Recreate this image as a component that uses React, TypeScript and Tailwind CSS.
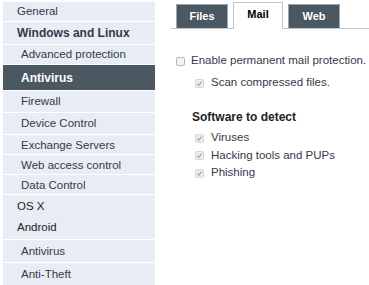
import React from 'react';

type NavItem = { label: string; h: string; indent?: boolean; bold?: boolean; active?: boolean };

const NAV: NavItem[] = [
  { label: 'General', h: 'h-[19px]' },
  { label: 'Windows and Linux', h: 'h-[22px]', bold: true },
  { label: 'Advanced protection', h: 'h-[19px]', indent: true },
  { label: 'Antivirus', h: 'h-[25px]', indent: true, active: true },
  { label: 'Firewall', h: 'h-[21px]', indent: true },
  { label: 'Device Control', h: 'h-[22px]', indent: true },
  { label: 'Exchange Servers', h: 'h-[19px]', indent: true },
  { label: 'Web access control', h: 'h-[19px]', indent: true },
  { label: 'Data Control', h: 'h-[19px]', indent: true },
];

const NAV_BOTTOM: NavItem[] = [
  { label: 'Antivirus', h: 'h-[22px]', indent: true },
  { label: 'Anti-Theft', h: 'h-[22px]', indent: true },
];

function NavRow({ item }: { item: NavItem }) {
  return (
    <div
      className={`${item.h} flex items-center pt-px ${item.indent ? 'pl-[18px]' : 'pl-[14px]'} ${
        item.active ? 'bg-[#4b5761] text-white font-bold text-[12px]' : 'bg-[#e8edf5] text-[#38374a]'
      } ${item.bold ? 'font-bold text-[#222] text-[12px]' : ''}`}
    >
      {item.label}
    </div>
  );
}

function Check({ checked, disabled }: { checked?: boolean; disabled?: boolean }) {
  return (
    <span
      className={`w-[9px] h-[9px] rounded-[2px] border flex items-center justify-center shrink-0 ${
        disabled ? 'border-[#d6d6d6] bg-[#ededed]' : 'border-[#b8b8b8] bg-[#f3f3f3]'
      }`}
    >
      {checked && (
        <svg width="7" height="7" viewBox="0 0 8 8">
          <path d="M1.5 4.2 L3.2 6 L6.5 1.8" fill="none" stroke="#a8a8a8" strokeWidth="1.4" />
        </svg>
      )}
    </span>
  );
}

function Tab({ label, active }: { label: string; active?: boolean }) {
  return active ? (
    <div className="w-[50px] h-[27px] -mb-px border border-b-0 border-[#c3c6c9] bg-white flex items-center justify-center pb-[3px] text-[11px] font-bold text-black">
      {label}
    </div>
  ) : (
    <div className="w-[52px] h-[24px] border border-b-0 border-[#9da4aa] bg-[#4b5761] flex items-center justify-center text-[11px] font-bold text-white">
      {label}
    </div>
  );
}

export default function App() {
  return (
    <div
      className="w-[369px] h-[285px] bg-white flex overflow-hidden text-[11.5px] whitespace-nowrap"
      style={{ fontFamily: '"Liberation Sans", Arial, sans-serif' }}
    >
      <div className="w-[152px] ml-[3px] pt-[2px] flex flex-col gap-px shrink-0">
        {NAV.map((item, i) => (
          <NavRow key={i} item={item} />
        ))}
        <div className="h-[44px] bg-[#e8edf5] text-[#222] flex flex-col">
          <div className="h-[20px] pl-[14px] flex items-end">OS X</div>
          <div className="h-[24px] pl-[14px] flex items-center">Android</div>
        </div>
        {NAV_BOTTOM.map((item, i) => (
          <NavRow key={i} item={item} />
        ))}
      </div>

      <div className="ml-[16px] flex-1 flex flex-col min-w-0">
        <div className="h-[29px] pt-[2px] pl-[5px] flex items-end gap-[5px] border-b border-[#c3c6c9]">
          <Tab label="Files" />
          <Tab label="Mail" active />
          <Tab label="Web" />
        </div>

        <div className="pl-[5px] text-[#38374a]">
          <label className="mt-[25px] h-[14px] flex items-center gap-[6px]">
            <Check />
            <span>Enable permanent mail protection.</span>
          </label>
          <label className="mt-[8px] ml-[19px] h-[14px] flex items-center gap-[7px]">
            <Check checked disabled />
            <span>Scan compressed files.</span>
          </label>

          <div className="mt-[20px] ml-[16px] h-[14px] flex items-center font-bold text-[12px] text-[#222]">
            Software to detect
          </div>
          <div className="mt-[7px] ml-[19px] flex flex-col gap-[3.5px]">
            {['Viruses', 'Hacking tools and PUPs', 'Phishing'].map((t) => (
              <label key={t} className="h-[14px] flex items-center gap-[7px]">
                <Check checked disabled />
                <span>{t}</span>
              </label>
            ))}
          </div>
        </div>
      </div>
    </div>
  );
}
